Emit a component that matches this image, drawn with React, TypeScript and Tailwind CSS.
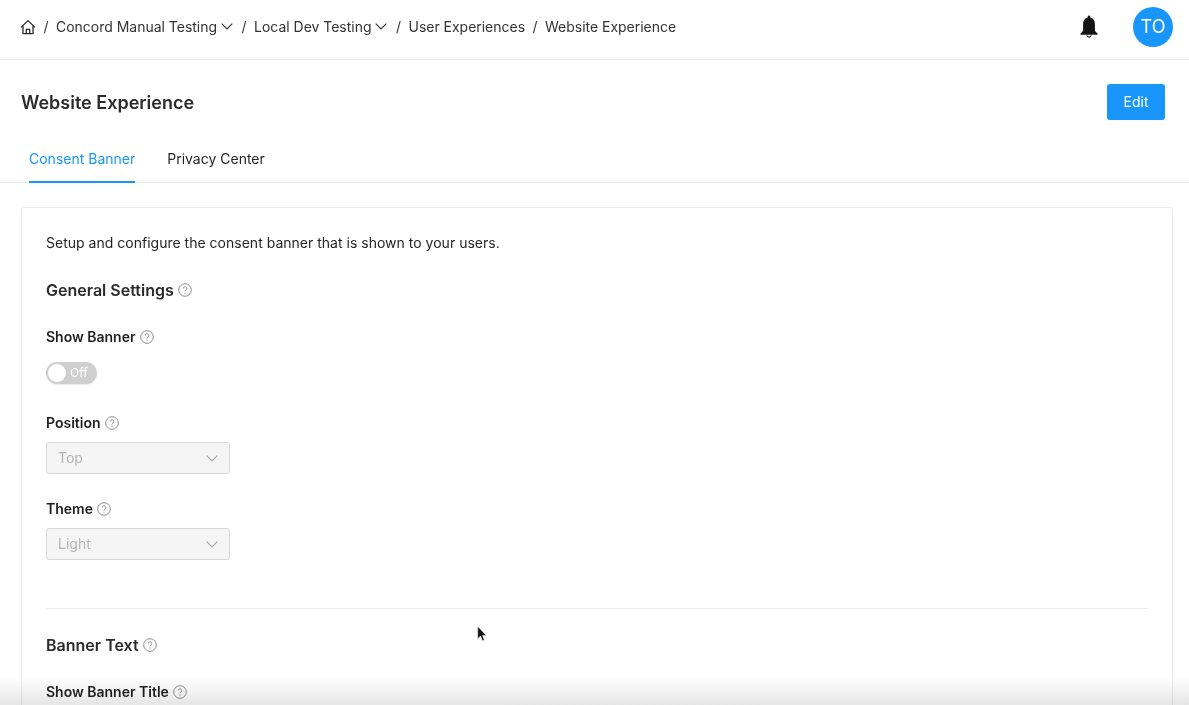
function Chevron({ className = "" }: { className?: string }) {
  return (
    <svg viewBox="0 0 12 7" fill="none" stroke="currentColor" className={`h-[7px] w-3 shrink-0 ${className}`}>
      <path d="M0.7 0.7 6 6l5.3-5.3" strokeWidth="1.1" />
    </svg>
  );
}

function HelpIcon() {
  return (
    <svg viewBox="0 0 16 16" fill="none" className="size-[14px] shrink-0 text-[#7d7d7d]">
      <circle cx="8" cy="8" r="7.2" stroke="currentColor" strokeWidth="1" />
      <path d="M6 6.300a2 2 0 1 1 3.100 1.700c-.7.400-1.100.800-1.100 1.600" stroke="currentColor" strokeWidth="1" />
      <circle cx="8" cy="11.500" r="0.700" fill="currentColor" />
    </svg>
  );
}

function Heading({ children }: { children: string }) {
  return (
    <div className="flex h-6 items-center gap-1">
      <span className="text-base font-semibold text-[#2b2b2b]">{children}</span>
      <HelpIcon />
    </div>
  );
}

function Label({ children }: { children: string }) {
  return (
    <div className="flex h-5 items-center gap-1">
      <span className="text-sm font-semibold text-[#1f1f1f]">{children}</span>
      <HelpIcon />
    </div>
  );
}

function DisabledSelect({ value }: { value: string }) {
  return (
    <div className="mt-[9px] flex h-8 w-[184px] items-center justify-between rounded-[3px] border border-[#d9d9d9] bg-[#f5f5f5] pl-[11px] pr-[11px] text-sm text-[#b5b5b5]">
      <span>{value}</span>
      <Chevron className="text-[#a3a3a3]" />
    </div>
  );
}

function Crumb({ children, menu }: { children: string; menu?: boolean }) {
  return (
    <>
      <span className="mx-[7.5px] text-[#333]">/</span>
      <span>{children}</span>
      {menu && <Chevron className="ml-1 mr-[1px] text-[#333]" />}
    </>
  );
}

export default function App() {
  return (
    <div className="relative h-[705px] overflow-hidden bg-white font-['Inter',sans-serif] text-[#262626]">
      <header className="flex h-[60px] items-center justify-between border-b border-[#ebebeb] pl-[20px] pr-4">
        <nav className="mb-[6px] flex items-center text-sm tracking-[-0.02px] text-[#333]">
          <svg viewBox="0 0 16 16" fill="none" stroke="#262626" strokeWidth="1.25" strokeLinejoin="round" className="size-4 shrink-0">
            <path d="M1 8.400 8 1.600l7 6.800" />
            <path d="M3 7v7.600h10V7" />
            <path d="M6.300 14.600v-4.200h3.400v4.200" />
          </svg>
          <Crumb menu>Concord Manual Testing</Crumb>
          <Crumb menu>Local Dev Testing</Crumb>
          <Crumb>User Experiences</Crumb>
          <Crumb>Website Experience</Crumb>
        </nav>
        <div className="mb-[5px] flex items-center gap-[34px]">
          <svg viewBox="0 0 20 24" className="h-[24px] w-[20px] text-[#141414]" fill="currentColor">
            <path d="M10 .6c.8 0 1.300.6 1.300 1.400v.6c2.900.7 4.600 3.200 4.600 6.200v5.600c0 1.600.9 2.900 2.600 3.800v1.600h-17v-1.600c1.700-.9 2.600-2.200 2.600-3.800V8.800c0-3 1.700-5.500 4.600-6.200V2c0-.8.5-1.400 1.300-1.400Z" />
            <path d="M7.800 20.400a2.300 2.300 0 0 0 4.400 0" fill="none" stroke="currentColor" strokeWidth="1.200" />
          </svg>
          <div className="flex size-10 items-center justify-center rounded-full bg-[#1896fb] text-lg text-white">TO</div>
        </div>
      </header>

      <div className="flex items-center justify-between pl-[21px] pr-6 pt-6">
        <h1 className="mt-[1px] text-lg font-semibold text-[#2b2b2b]">Website Experience</h1>
        <button className="h-9 w-[58px] rounded-[3px] bg-[#1896fb] text-sm text-white">Edit</button>
      </div>

      <div className="mt-[20px] flex h-[43px] gap-8 border-b border-[#e8e8e8] pl-[29px] text-sm">
        <div className="flex h-[43px] items-center border-b-2 border-[#1896fb] pb-[4px] text-[#1896fb]">Consent Banner</div>
        <div className="flex h-[43px] items-center pb-[6px] text-[#262626]">Privacy Center</div>
      </div>

      <main className="ml-[21px] mr-4 mt-6 h-[600px] rounded-[3px] border border-[#ebebeb] px-6 pt-[25px]">
        <p className="text-sm leading-5 tracking-[0.01px] text-[#262626]">Setup and configure the consent banner that is shown to your users.</p>
        <div className="mt-[25px]">
          <Heading>General Settings</Heading>
        </div>
        <div className="mt-[25px]">
          <Label>Show Banner</Label>
        </div>
        <div className="mt-[15px] flex h-[22px] w-[51px] items-center rounded-full bg-[#cfcfcf] pl-[2px] shadow-[0_1px_1px_rgba(0,0,0,0.08)]">
          <span className="size-[18px] rounded-full bg-white" />
          <span className="ml-[4px] text-xs text-white">Off</span>
        </div>
        <div className="mt-[29px]">
          <Label>Position</Label>
        </div>
        <DisabledSelect value="Top" />
        <div className="mt-[25px]">
          <Label>Theme</Label>
        </div>
        <DisabledSelect value="Light" />
        <div className="mt-12 border-t border-[#ededed]" />
        <div className="mt-6">
          <Heading>Banner Text</Heading>
        </div>
        <div className="mt-[25px]">
          <Label>Show Banner Title</Label>
        </div>
      </main>

      {/* cursor and the shadow along the bottom edge lie over the page */}
      <svg viewBox="0 0 12 18" className="absolute left-[476px] top-[626px] h-[17px] w-[12px]">
        <path d="M1.500 0.500v13l3-2.800 2 5 2-.9-2-4.800h4Z" fill="#111" stroke="#e5e5e5" strokeWidth="0.6" />
      </svg>
      <div className="pointer-events-none absolute inset-x-0 bottom-0 h-[28px] bg-gradient-to-b from-white to-[#e6e6e6] mix-blend-multiply" />
    </div>
  );
}
